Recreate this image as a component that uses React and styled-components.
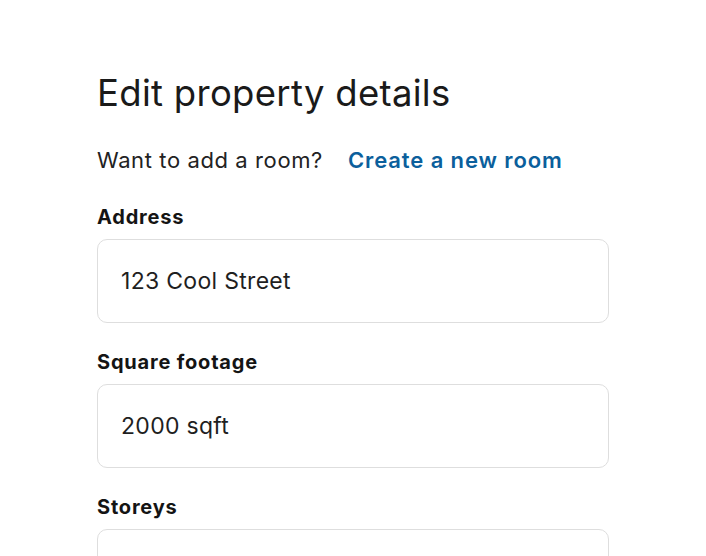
import React from 'react';
import styled, { createGlobalStyle } from 'styled-components';

const GlobalStyle = createGlobalStyle`
  body {
    margin: 0;
    background: #fff;
    font-family: Inter, "Noto Sans", sans-serif;
    color: #1f1f1f;
  }
`;

const Page = styled.div`
  padding: 71px 97px 0;
  width: 512px;
`;

const Title = styled.h1`
  margin: 0 0 31px;
  font-size: 36.5px;
  font-weight: 400;
  line-height: 44px;
  color: #1a1a1a;
  letter-spacing: 0.3px;
`;

const Prompt = styled.p`
  margin: 0 0 30px;
  font-size: 22px;
  line-height: 28px;
  color: #222;
  display: flex;
  gap: 25px;
  letter-spacing: 0.6px;
`;

const Link = styled.a`
  color: #0b5f9c;
  font-weight: 600;
  text-decoration: none;
  letter-spacing: 0.9px;
`;

const Field = styled.div`
  display: flex;
  flex-direction: column;
  gap: 9px;
  margin-bottom: 26px;
`;

const Label = styled.label`
  font-size: 20px;
  font-weight: 700;
  line-height: 26px;
  color: #141414;
  letter-spacing: 0.8px;
`;

const Input = styled.input`
  box-sizing: border-box;
  height: 84px;
  width: 512px;
  border: 1.5px solid #dedede;
  border-radius: 10px;
  padding: 0 23px;
  font-family: inherit;
  font-size: 23px;
  letter-spacing: 0.3px;
  color: #1f1f1f;
  outline: none;
`;

const fields = [
  { label: 'Address', value: '123 Cool Street' },
  { label: 'Square footage', value: '2000 sqft' },
  { label: 'Storeys', value: '' },
];

export default function App() {
  return (
    <>
      <GlobalStyle />
      <Page>
        <Title>Edit property details</Title>
        <Prompt>
          <span>Want to add a room?</span>
          <Link href="#">Create a new room</Link>
        </Prompt>
        {fields.map((f) => (
          <Field key={f.label}>
            <Label>{f.label}</Label>
            <Input defaultValue={f.value} />
          </Field>
        ))}
      </Page>
    </>
  );
}
